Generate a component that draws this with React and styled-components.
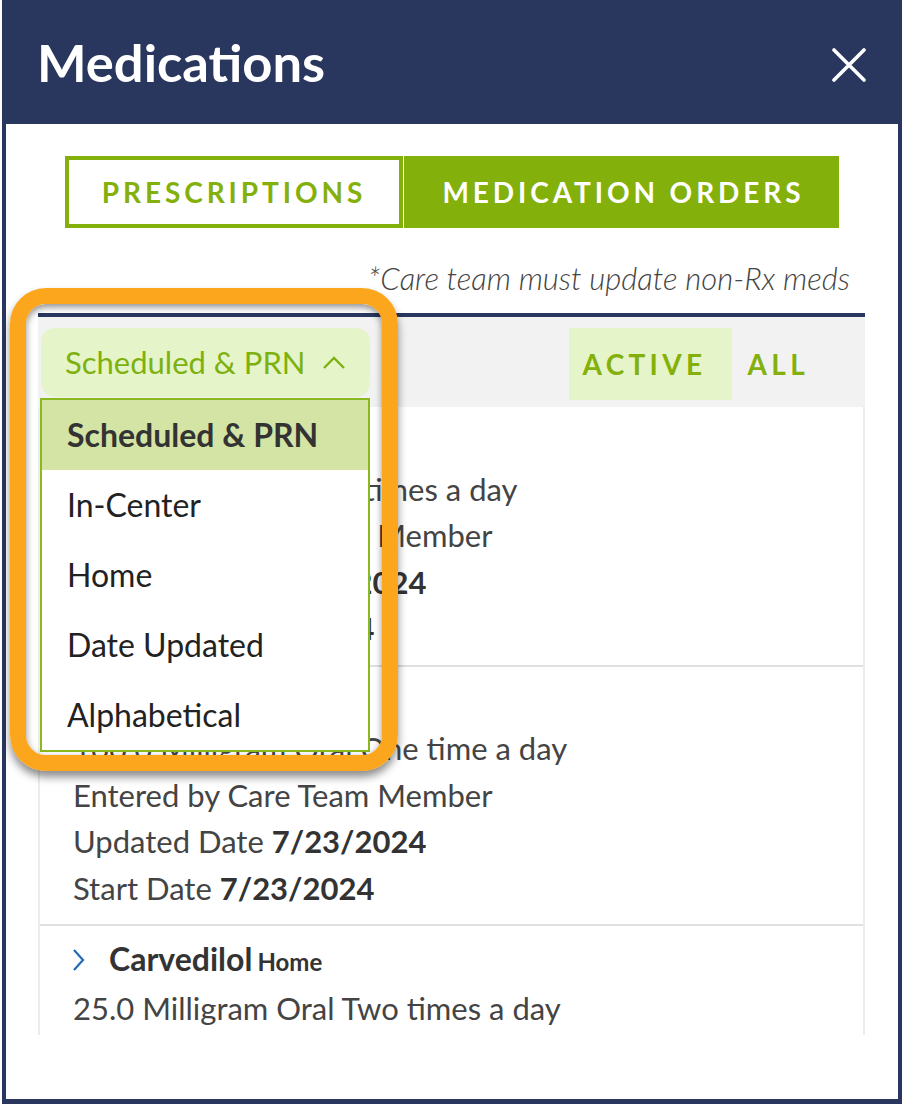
import React from "react";
import styled, { createGlobalStyle } from "styled-components";

const NAVY = "#29375f";
const GREEN = "#84b00b";
const PALE = "#e6f4ca";

const GlobalStyle = createGlobalStyle`
  html, body { margin: 0; padding: 0; background: #fff; }
  body { font-family: Lato, "Open Sans", sans-serif; }
  * { box-sizing: border-box; }
`;

const Page = styled.div`
  position: relative;
  width: 902px;
  height: 1104px;
  overflow: hidden;
  background: #fff;
`;

const Panel = styled.div`
  margin-left: 2px;
  width: 900px;
  height: 1104px;
  background: ${NAVY};
  padding: 0 4px 5px;
  display: flex;
  flex-direction: column;
`;

const Header = styled.header`
  flex: none;
  height: 124px;
  display: flex;
  align-items: center;
  justify-content: space-between;
  padding: 0 32px 0 31px;
`;

const Title = styled.h1`
  margin: 0;
  font: 700 52.5px/1 Lato, sans-serif;
  color: #fff;
`;

const CloseButton = styled.button`
  width: 34px;
  height: 34px;
  padding: 0;
  border: none;
  background: transparent;
  display: flex;
  margin-top: 6px;
`;

const Body = styled.main`
  flex: 1;
  background: #fff;
  display: flex;
  flex-direction: column;
`;

const Tabs = styled.div`
  display: flex;
  gap: 1px;
  margin: 32px auto 0;
`;

const Tab = styled.button`
  width: ${(p) => p.$w}px;
  height: 72px;
  border: 4px solid ${GREEN};
  background: ${(p) => (p.$active ? GREEN : "#fff")};
  color: ${(p) => (p.$active ? "#fff" : GREEN)};
  font: 700 28px/1 Lato, sans-serif;
  letter-spacing: 3.9px;
  padding: 0 0 0 ${(p) => (p.$active ? 3.9 : 0)}px;
  display: flex;
  align-items: center;
  justify-content: center;
`;

const Content = styled.div`
  flex: 1;
  display: flex;
  flex-direction: column;
  padding: 0 33px 0 32px;
`;

const Note = styled.p`
  margin: 35px 0 0;
  padding-right: 15px;
  text-align: right;
  font: italic 300 31px/30px Lato, sans-serif;
  color: #444;
`;

const ListSection = styled.section`
  margin-top: 20px;
  border-top: 4px solid ${NAVY};
`;

const FilterBar = styled.div`
  height: 90px;
  background: #f2f2f2;
  display: flex;
  align-items: flex-start;
  justify-content: space-between;
  padding: 11px 0 0 3px;
`;

const SortWrap = styled.div`
  position: relative;
`;

const SortButton = styled.button`
  width: 329px;
  height: 69px;
  border: none;
  border-radius: 14px;
  background: ${PALE};
  color: #7db10e;
  font: 400 31px/1 Lato, sans-serif;
  display: flex;
  align-items: center;
  padding: 0 24px;
  svg { margin-left: auto; }
`;

const Menu = styled.ul`
  position: absolute;
  top: 70px;
  left: -1px;
  width: 330px;
  margin: 0;
  padding: 0;
  list-style: none;
  border: 2px solid #8ab91e;
  background: #fff;
  z-index: 3;
`;

const MenuItem = styled.li`
  height: 70px;
  display: flex;
  align-items: center;
  padding-left: 25px;
  font: ${(p) => (p.$selected ? 700 : 400)} 32px/1 Lato, sans-serif;
  color: ${(p) => (p.$selected ? "#333" : "#222")};
  background: ${(p) => (p.$selected ? "#d3e4a5" : "#fff")};
`;

const StatusToggle = styled.div`
  display: flex;
  margin-right: 40px;
`;

const StatusButton = styled.button`
  height: 72px;
  border: none;
  background: ${(p) => (p.$active ? PALE : "transparent")};
  color: ${GREEN};
  font: 700 28px/1 Lato, sans-serif;
  letter-spacing: 4.3px;
  padding: ${(p) => (p.$active ? "0 0 0 14px" : "0 16px 0 16px")};
  width: ${(p) => (p.$active ? "163px" : "auto")};
  text-align: left;
`;

const MedList = styled.div`
  height: 628px;
  overflow: hidden;
  border-left: 2px solid #ececec;
  border-right: 2px solid #ececec;
`;

const MedItem = styled.article`
  padding: 12px 30px 13px 33px;
  border-bottom: 2px solid #e0e0e0;
  font: 400 31px/46.5px Lato, sans-serif;
  color: #444;
`;

const ItemTitle = styled.div`
  display: flex;
  align-items: center;
  height: 46.5px;
  margin-top: -2px;
  margin-bottom: 2px;
  color: #333;
  svg { margin: 2px 24px 0 -1px; flex: none; }
`;

const TitleText = styled.span`
  display: flex;
  align-items: baseline;
  line-height: 1;
`;

const MedName = styled.span`
  font-weight: 700;
  font-size: 32px;
`;

const Location = styled.span`
  font-weight: 700;
  font-size: 24px;
  margin-left: 5px;
`;

const Line = styled.div``;

const Strong = styled.b`
  font-weight: 700;
  color: #333;
`;

const Highlight = styled.div`
  position: absolute;
  left: 10px;
  top: 288px;
  width: 388px;
  height: 483px;
  border: 16px solid #fca61e;
  border-radius: 36px;
  box-shadow: 0 6px 9px rgba(0, 0, 0, 0.45), inset 0 3px 7px rgba(0, 0, 0, 0.45);
  pointer-events: none;
  z-index: 5;
`;

const CloseIcon = () => (
  <svg width="34" height="34" viewBox="0 0 34 34">
    <path d="M2 2 L32 32 M32 2 L2 32" stroke="#fff" strokeWidth="3.6" strokeLinecap="round" fill="none" />
  </svg>
);

const ChevronUp = () => (
  <svg width="24" height="14" viewBox="0 0 24 14">
    <polyline points="2,12 12,2 22,12" fill="none" stroke="#7db10e" strokeWidth="2.3" />
  </svg>
);

const ChevronRight = () => (
  <svg width="13" height="22" viewBox="0 0 13 22">
    <polyline points="2,1 11,11 2,21" fill="none" stroke="#1f6cb4" strokeWidth="2.2" />
  </svg>
);

const meds = [
  {
    name: "Aspirin",
    loc: "Home",
    dose: "5 Milligram Oral Two times a day",
    updated: "7/23/2024",
    start: "7/23/2024",
  },
  {
    name: "Sevelamer",
    loc: "Home",
    dose: "100.0 Milligram Oral One time a day",
    updated: "7/23/2024",
    start: "7/23/2024",
  },
  {
    name: "Carvedilol",
    loc: "Home",
    dose: "25.0 Milligram Oral Two times a day",
    updated: "7/23/2024",
    start: "7/23/2024",
  },
];

const sortOptions = ["Scheduled & PRN", "In-Center", "Home", "Date Updated", "Alphabetical"];

export default function App() {
  return (
    <Page>
      <GlobalStyle />
      <Panel>
        <Header>
          <Title>Medications</Title>
          <CloseButton aria-label="Close">
            <CloseIcon />
          </CloseButton>
        </Header>
        <Body>
          <Tabs>
            <Tab $w={338}>PRESCRIPTIONS</Tab>
            <Tab $w={435} $active>
              MEDICATION ORDERS
            </Tab>
          </Tabs>
          <Content>
            <Note>*Care team must update non-Rx meds</Note>
            <ListSection>
              <FilterBar>
                <SortWrap>
                  <SortButton>
                    Scheduled &amp; PRN
                    <ChevronUp />
                  </SortButton>
                  <Menu>
                    {sortOptions.map((o, i) => (
                      <MenuItem key={o} $selected={i === 0}>
                        {o}
                      </MenuItem>
                    ))}
                  </Menu>
                </SortWrap>
                <StatusToggle>
                  <StatusButton $active>ACTIVE</StatusButton>
                  <StatusButton>ALL</StatusButton>
                </StatusToggle>
              </FilterBar>
              <MedList>
                {meds.map((m) => (
                  <MedItem key={m.name}>
                    <ItemTitle>
                      <ChevronRight />
                      <TitleText>
                        <MedName>{m.name}</MedName>
                        <Location>{m.loc}</Location>
                      </TitleText>
                    </ItemTitle>
                    <Line>{m.dose}</Line>
                    <Line>Entered by Care Team Member</Line>
                    <Line>
                      Updated Date <Strong>{m.updated}</Strong>
                    </Line>
                    <Line>
                      Start Date <Strong>{m.start}</Strong>
                    </Line>
                  </MedItem>
                ))}
              </MedList>
            </ListSection>
          </Content>
        </Body>
      </Panel>
      <Highlight />
    </Page>
  );
}
